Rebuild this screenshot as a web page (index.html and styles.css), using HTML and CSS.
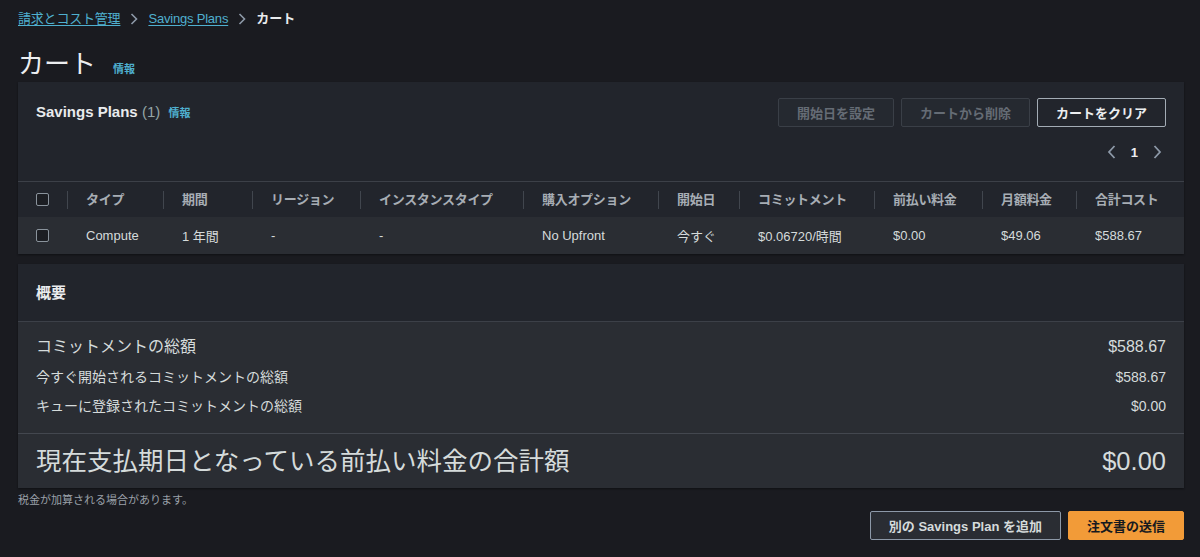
FILE: index.html
```html
<!DOCTYPE html>
<html lang="ja">
<head>
<meta charset="utf-8">
<title>カート</title>
<link rel="stylesheet" href="styles.css">
</head>
<body>
<div class="page">
  <nav class="breadcrumbs">
    <a class="crumb-link" href="#">請求とコスト管理</a>
    <svg class="crumb-sep" width="8" height="12" viewBox="0 0 8 12"><polyline points="1.5,1 6.5,6 1.5,11" fill="none" stroke="#8d99a8" stroke-width="1.6"/></svg>
    <a class="crumb-link" href="#">Savings Plans</a>
    <svg class="crumb-sep" width="8" height="12" viewBox="0 0 8 12"><polyline points="1.5,1 6.5,6 1.5,11" fill="none" stroke="#8d99a8" stroke-width="1.6"/></svg>
    <span class="crumb-current">カート</span>
  </nav>

  <div class="page-title">
    <h1>カート</h1>
    <a class="info" href="#">情報</a>
  </div>

  <section class="panel">
    <div class="panel-header">
      <div class="header-row">
        <h2 class="panel-title">Savings Plans <span class="count">(1)</span> <a class="info" href="#">情報</a></h2>
        <div class="actions">
          <button class="btn btn-disabled">開始日を設定</button>
          <button class="btn btn-disabled">カートから削除</button>
          <button class="btn btn-normal">カートをクリア</button>
        </div>
      </div>
      <div class="pager">
        <svg width="10" height="16" viewBox="0 0 10 16"><polyline points="7.5,2 2,8 7.5,14" fill="none" stroke="#8d99a8" stroke-width="1.8"/></svg>
        <span class="page-num">1</span>
        <svg width="10" height="16" viewBox="0 0 10 16"><polyline points="2.5,2 8,8 2.5,14" fill="none" stroke="#8d99a8" stroke-width="1.8"/></svg>
      </div>
    </div>
    <table class="cart-table">
      <colgroup>
        <col class="c-check"><col class="c-type"><col class="c-term"><col class="c-region"><col class="c-inst"><col class="c-opt"><col class="c-start"><col class="c-commit"><col class="c-up"><col class="c-month"><col class="c-total">
      </colgroup>
      <thead>
        <tr>
          <th class="check-cell"><span class="checkbox"></span></th>
          <th><div class="th-in">タイプ</div></th>
          <th><div class="th-in">期間</div></th>
          <th><div class="th-in">リージョン</div></th>
          <th><div class="th-in">インスタンスタイプ</div></th>
          <th><div class="th-in">購入オプション</div></th>
          <th><div class="th-in">開始日</div></th>
          <th><div class="th-in">コミットメント</div></th>
          <th><div class="th-in">前払い料金</div></th>
          <th><div class="th-in">月額料金</div></th>
          <th><div class="th-in">合計コスト</div></th>
        </tr>
      </thead>
      <tbody>
        <tr>
          <td class="check-cell"><span class="checkbox"></span></td>
          <td>Compute</td>
          <td>1 年間</td>
          <td>-</td>
          <td>-</td>
          <td>No Upfront</td>
          <td>今すぐ</td>
          <td>$0.06720/時間</td>
          <td>$0.00</td>
          <td>$49.06</td>
          <td>$588.67</td>
        </tr>
      </tbody>
    </table>
  </section>

  <section class="panel summary">
    <div class="summary-header"><h2 class="panel-title">概要</h2></div>
    <div class="summary-body">
      <div class="sum-row sum-main"><span>コミットメントの総額</span><span>$588.67</span></div>
      <div class="sum-row"><span>今すぐ開始されるコミットメントの総額</span><span>$588.67</span></div>
      <div class="sum-row"><span>キューに登録されたコミットメントの総額</span><span>$0.00</span></div>
    </div>
    <div class="sum-total"><span>現在支払期日となっている前払い料金の合計額</span><span>$0.00</span></div>
  </section>

  <p class="note">税金が加算される場合があります。</p>

  <div class="footer-actions">
    <button class="btn btn-secondary">別の Savings Plan を追加</button>
    <button class="btn btn-primary">注文書の送信</button>
  </div>
</div>
</body>
</html>
```

FILE: styles.css
```css
* { box-sizing: border-box; }

html, body {
  margin: 0;
  padding: 0;
  background: #1a1b20;
  color: #d5dbdb;
  font-family: "Liberation Sans", "Noto Sans CJK JP", sans-serif;
  font-size: 13px;
}

.page {
  padding: 10px 16px 0 18px;
}

.breadcrumbs {
  display: flex;
  align-items: center;
  gap: 10px;
  height: 18px;
  line-height: 18px;
  font-size: 13px;
}

.crumb-link {
  color: #4fb0cf;
  text-decoration: underline;
  text-underline-offset: 2px;
  letter-spacing: -0.2px;
}

.crumb-sep { display: block; }

.crumb-current {
  color: #e9ebed;
  font-weight: bold;
}

.page-title {
  display: flex;
  align-items: baseline;
  margin-top: 19px;
  height: 35px;
}

.page-title h1 {
  margin: 0;
  font-size: 26px;
  line-height: 34px;
  font-weight: normal;
  color: #eceef0;
}

.info {
  color: #4fb0cf;
  font-size: 11px;
  font-weight: bold;
  text-decoration: none;
  margin-left: 17px;
}

.panel {
  background: #22252c;
  box-shadow: 0 1px 2px rgba(0, 0, 0, 0.4);
}

.panel-header {
  padding: 16px 18px 19px 18px;
  border-bottom: 1px solid #3c4048;
}

.header-row {
  display: flex;
  justify-content: space-between;
  align-items: center;
}

.panel-title {
  margin: 0;
  font-size: 15px;
  font-weight: bold;
  color: #e9ebed;
  line-height: 22px;
}

.panel-title .count {
  font-weight: normal;
  color: #95a5a6;
}

.panel-title .info {
  margin-left: 4px;
}

.actions {
  display: flex;
  gap: 7px;
}

.btn {
  font-family: "Liberation Sans", "Noto Sans CJK JP", sans-serif;
  font-size: 13px;
  font-weight: bold;
  height: 29px;
  padding: 0 18px;
  border-radius: 2px;
  background: transparent;
  cursor: pointer;
}

.btn-disabled {
  border: 1px solid #3a3f47;
  color: #656c75;
  background: #252930;
}

.btn-normal {
  border: 1px solid #a3acb5;
  color: #eceef0;
  background: #22252c;
}

.pager {
  display: flex;
  justify-content: flex-end;
  align-items: center;
  gap: 14px;
  margin-top: 15px;
  height: 20px;
  padding-right: 4px;
}

.pager svg { display: block; }

.page-num {
  font-weight: bold;
  color: #eceef0;
  font-size: 13px;
}

.cart-table {
  width: 100%;
  border-collapse: collapse;
  table-layout: fixed;
}

.c-check { width: 49px; }
.c-type { width: 96px; }
.c-term { width: 89px; }
.c-region { width: 108px; }
.c-inst { width: 163px; }
.c-opt { width: 135px; }
.c-start { width: 81px; }
.c-commit { width: 135px; }
.c-up { width: 108px; }
.c-month { width: 94px; }
.c-total { width: auto; }

.cart-table th {
  height: 35px;
  padding: 0;
  text-align: left;
  font-weight: bold;
  color: #a7adb4;
  font-size: 13px;
  white-space: nowrap;
}

.th-in {
  border-left: 1px solid #41464e;
  padding-left: 18px;
  line-height: 18px;
  letter-spacing: -0.3px;
}

.cart-table td {
  height: 37px;
  padding: 0 0 0 19px;
  background: #2a2d33;
  color: #d5dbdb;
  font-size: 13px;
  white-space: nowrap;
}

.cart-table .check-cell {
  padding-left: 18px;
}

.checkbox {
  display: block;
  width: 13px;
  height: 13px;
  border: 1px solid #8a939c;
  border-radius: 2px;
  background: #1c1e23;
}

.summary {
  margin-top: 10px;
}

.summary-header {
  padding: 18px 18px 17px 18px;
  border-bottom: 1px solid #3c4048;
}

.summary-body {
  background: #2a2d33;
  padding: 13px 18px 16px 18px;
  display: flex;
  flex-direction: column;
  gap: 7px;
  border-bottom: 1px solid #43474f;
}

.sum-row {
  display: flex;
  justify-content: space-between;
  font-size: 14px;
  line-height: 22px;
  color: #d5dbdb;
}

.sum-main {
  font-size: 16px;
  line-height: 24px;
}

.sum-total {
  background: #2a2d33;
  display: flex;
  justify-content: space-between;
  padding: 12px 18px;
  font-size: 25.5px;
  line-height: 30px;
  color: #d5dbdb;
}

.note {
  margin: 5px 0 0 0;
  font-size: 11px;
  line-height: 15px;
  color: #9aa1a9;
}

.footer-actions {
  display: flex;
  justify-content: flex-end;
  gap: 7px;
  margin-top: 3px;
}

.btn-secondary {
  border: 1px solid #8d99a8;
  color: #d5dbdb;
  background: #2a2d33;
  height: 29px;
}

.btn-primary {
  border: 1px solid #f29b38;
  background: #f29b38;
  color: #16191f;
  height: 29px;
}
```
